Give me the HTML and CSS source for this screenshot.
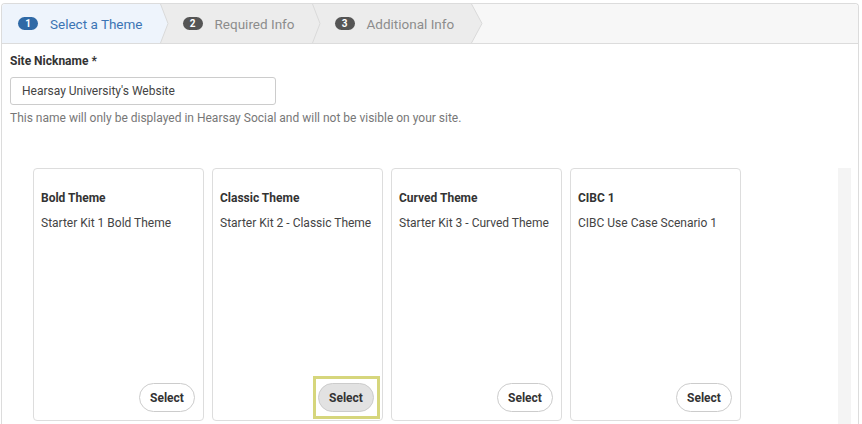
FILE: index.html
```html
<!DOCTYPE html>
<html>
<head>
<meta charset="utf-8">
<link rel="stylesheet" href="styles.css">
</head>
<body>
<div class="frame">
  <nav class="steps">
    <div class="step step-active">
      <span class="badge">1</span><span class="step-label">Select a Theme</span>
    </div>
    <svg class="arrow arrow-a" width="9" height="39" viewBox="0 0 9 39"><polygon points="0,0 0.5,0 8,19.5 0.5,39 0,39" fill="#eef4fc"/><polyline points="0.5,0 8,19.5 0.5,39" fill="none" stroke="#d9d9d9" stroke-width="1"/></svg>
    <div class="step">
      <span class="badge badge-gray">2</span><span class="step-label">Required Info</span>
    </div>
    <svg class="arrow arrow-b" width="9" height="39" viewBox="0 0 9 39"><polygon points="0,0 0.5,0 8,19.5 0.5,39 0,39" fill="#ececec"/><polyline points="0.5,0 8,19.5 0.5,39" fill="none" stroke="#d9d9d9" stroke-width="1"/></svg>
    <div class="step">
      <span class="badge badge-gray">3</span><span class="step-label">Additional Info</span>
    </div>
    <svg class="arrow arrow-c" width="12" height="39" viewBox="0 0 12 39"><polygon points="0,0 0.5,0 11,19.5 0.5,39 0,39" fill="#ececec"/><polyline points="0.5,0 11,19.5 0.5,39" fill="none" stroke="#d9d9d9" stroke-width="1"/></svg>
  </nav>
  <main class="content">
    <label class="field-label">Site Nickname *</label>
    <div class="input">Hearsay University's Website</div>
    <p class="help">This name will only be displayed in Hearsay Social and will not be visible on your site.</p>
    <div class="gallery">
      <div class="cards">
        <div class="card">
          <div class="card-title">Bold Theme</div>
          <div class="card-text">Starter Kit 1 Bold Theme</div>
          <div class="card-foot"><button class="btn">Select</button></div>
        </div>
        <div class="card">
          <div class="card-title">Classic Theme</div>
          <div class="card-text">Starter Kit 2 - Classic Theme</div>
          <div class="card-foot"><button class="btn btn-focus">Select</button></div>
        </div>
        <div class="card">
          <div class="card-title">Curved Theme</div>
          <div class="card-text">Starter Kit 3 - Curved Theme</div>
          <div class="card-foot"><button class="btn">Select</button></div>
        </div>
        <div class="card">
          <div class="card-title">CIBC 1</div>
          <div class="card-text">CIBC Use Case Scenario 1</div>
          <div class="card-foot"><button class="btn">Select</button></div>
        </div>
      </div>
      <div class="track"></div>
    </div>
  </main>
</div>
</body>
</html>
```

FILE: styles.css
```css
html, body {
  margin: 0;
  padding: 0;
  background: #ffffff;
  font-family: Roboto, "Liberation Sans", Arial, sans-serif;
  overflow: hidden;
}

.frame {
  margin: 3px 3px 0 1px;
  border: 1px solid #dcdcdc;
  border-bottom: none;
  border-radius: 4px 4px 0 0;
  height: 430px;
  box-sizing: border-box;
}

.steps {
  display: flex;
  height: 39px;
  background: #f7f7f7;
  border-bottom: 1px solid #dcdcdc;
  border-radius: 4px 4px 0 0;
  overflow: hidden;
}

.step {
  display: flex;
  align-items: center;
  background: #ececec;
  padding: 0 17px 0 14px;
  font-size: 13.5px;
  color: #8c8c8c;
}

.step-active {
  background: #eef4fc;
  color: #3c74b4;
  padding: 0 17px 0 16px;
}

.arrow {
  display: block;
  flex: none;
}
.arrow-a, .arrow-b { background: #ececec; }
.arrow-c { background: #f7f7f7; }

.badge {
  display: inline-flex;
  align-items: center;
  justify-content: center;
  width: 20px;
  height: 13px;
  border-radius: 7px;
  background: #2f69a6;
  color: #fff;
  font-size: 10px;
  font-weight: 700;
  margin-right: 12px;
}
.badge-gray { background: #555555; }

.content {
  padding: 9px 7px 0 8px;
}

.field-label {
  display: block;
  font-size: 12px;
  line-height: 16px;
  font-weight: 700;
  color: #333;
}

.input {
  margin-top: 8px;
  width: 266px;
  height: 28px;
  box-sizing: border-box;
  border: 1px solid #cccccc;
  border-radius: 3px;
  padding: 0 11px;
  font-size: 12px;
  line-height: 26px;
  color: #444;
}

.help {
  margin: 5px 0 0;
  font-size: 12px;
  line-height: 16px;
  color: #777;
}

.gallery {
  display: flex;
  margin-top: 42px;
  padding-left: 23px;
}

.cards {
  flex: 1;
  display: flex;
  gap: 8px;
  align-items: flex-start;
}

.track {
  width: 13px;
  height: 270px;
  background: #f4f4f4;
  flex: none;
}

.card {
  width: 171px;
  height: 253px;
  box-sizing: border-box;
  border: 1px solid #dddddd;
  border-radius: 4px;
  padding: 21px 7px 8px;
  display: flex;
  flex-direction: column;
}

.card-title {
  font-size: 12px;
  line-height: 16px;
  font-weight: 700;
  color: #333;
}

.card-text {
  margin-top: 9px;
  font-size: 12px;
  line-height: 16px;
  color: #444;
}

.card-foot {
  margin-top: auto;
  display: flex;
  justify-content: flex-end;
  padding-right: 1px;
}

.btn {
  position: relative;
  width: 56px;
  height: 29px;
  border: 1px solid #cccccc;
  border-radius: 15px;
  background: #ffffff;
  font-family: Roboto, "Liberation Sans", Arial, sans-serif;
  font-size: 12px;
  font-weight: 700;
  color: #333;
  padding: 0;
}

.btn-focus {
  background: #e2e2e2;
}
.btn-focus::after {
  content: "";
  position: absolute;
  left: -6px;
  right: -7px;
  top: -8px;
  bottom: -8px;
  border: 3px solid #d6d67c;
}
```
